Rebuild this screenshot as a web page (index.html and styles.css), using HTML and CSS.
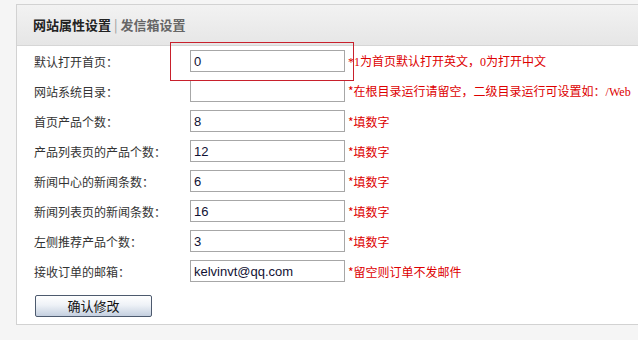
FILE: index.html
```html
<!DOCTYPE html>
<html lang="zh-CN">
<head>
    <meta charset="UTF-8">
    <title>网站属性设置</title>
    <link rel="stylesheet" href="styles.css">
</head>
<body>
    <div class="panel">
        <div class="panel-head">
            <span class="tab-on">网站属性设置</span>
            <span class="sep">|</span>
            <span class="tab-off">发信箱设置</span>
        </div>
        <form class="form">
            <div class="row">
                <label class="label">默认打开首页：</label>
                <input class="field" type="text" value="0">
                <span class="hint"><span class="num">*1</span>为首页默认打开英文，<span class="num">0</span>为打开中文</span>
            </div>
            <div class="row">
                <label class="label">网站系统目录：</label>
                <input class="field" type="text" value="">
                <span class="hint">*在根目录运行请留空，二级目录运行可设置如：<span class="num">/Web</span></span>
            </div>
            <div class="row">
                <label class="label">首页产品个数：</label>
                <input class="field" type="text" value="8">
                <span class="hint">*填数字</span>
            </div>
            <div class="row">
                <label class="label">产品列表页的产品个数：</label>
                <input class="field" type="text" value="12">
                <span class="hint">*填数字</span>
            </div>
            <div class="row">
                <label class="label">新闻中心的新闻条数：</label>
                <input class="field" type="text" value="6">
                <span class="hint">*填数字</span>
            </div>
            <div class="row">
                <label class="label">新闻列表页的新闻条数：</label>
                <input class="field" type="text" value="16">
                <span class="hint">*填数字</span>
            </div>
            <div class="row">
                <label class="label">左侧推荐产品个数：</label>
                <input class="field" type="text" value="3">
                <span class="hint">*填数字</span>
            </div>
            <div class="row">
                <label class="label">接收订单的邮箱：</label>
                <input class="field" type="text" value="kelvinvt@qq.com">
                <span class="hint">*留空则订单不发邮件</span>
            </div>
            <button class="btn" type="button">确认修改</button>
        </form>

        <!-- highlight box around the first field -->
        <div class="mark"></div>
    </div>
</body>
</html>
```

FILE: styles.css
```css
body {
    margin: 0;
    padding: 4px 0 0 16px;
    background-color: #f5f5f5;
    font-family: "Noto Sans CJK SC", "Liberation Sans", sans-serif;
    font-size: 12px;
    color: #333;
}
.panel {
    position: relative;
    background: #fff;
    border: 1px solid #d2d2d2;
    border-right: none;
    height: 321px;
    box-sizing: border-box;
}
.panel-head {
    height: 40px;
    line-height: 40px;
    padding-left: 16px;
    background: linear-gradient(#f2f2f2, #e6e6e6);
    border-bottom: 1px solid #d6d6d6;
    font-size: 13px;
}
.tab-on {
    font-weight: bold;
    color: #222;
}
.sep {
    color: #999;
}
.tab-off {
    font-weight: bold;
    color: #666;
}
.form {
    padding-left: 17px;
}
.row {
    display: flex;
    align-items: center;
    height: 30px;
}
.label {
    width: 156px;
    flex-shrink: 0;
}
.field {
    width: 155px;
    height: 22px;
    box-sizing: border-box;
    margin: 0;
    padding: 0 3px;
    border: 1px solid #a7a7a7;
    font-family: "Liberation Sans", sans-serif;
    font-size: 13px;
    color: #111133;
    outline: none;
}
.hint {
    margin-left: 3px;
    color: #d00;
    white-space: nowrap;
}
.num {
    font-family: "Liberation Serif", serif;
}
.btn {
    display: block;
    margin-top: 9px;
    margin-left: 1px;
    width: 117px;
    height: 22px;
    padding: 0;
    border: 1px solid #4d5a6e;
    border-radius: 2px;
    background: linear-gradient(#ffffff, #eef2f7 45%, #c4cfdf);
    font-family: "Noto Sans CJK SC", sans-serif;
    font-size: 13px;
    font-weight: normal;
    line-height: 18px;
    color: #111;
}
.mark {
    position: absolute;
    left: 153px;
    top: 37px;
    width: 182px;
    height: 37px;
    border: 1px solid #c8202c;
}
```
